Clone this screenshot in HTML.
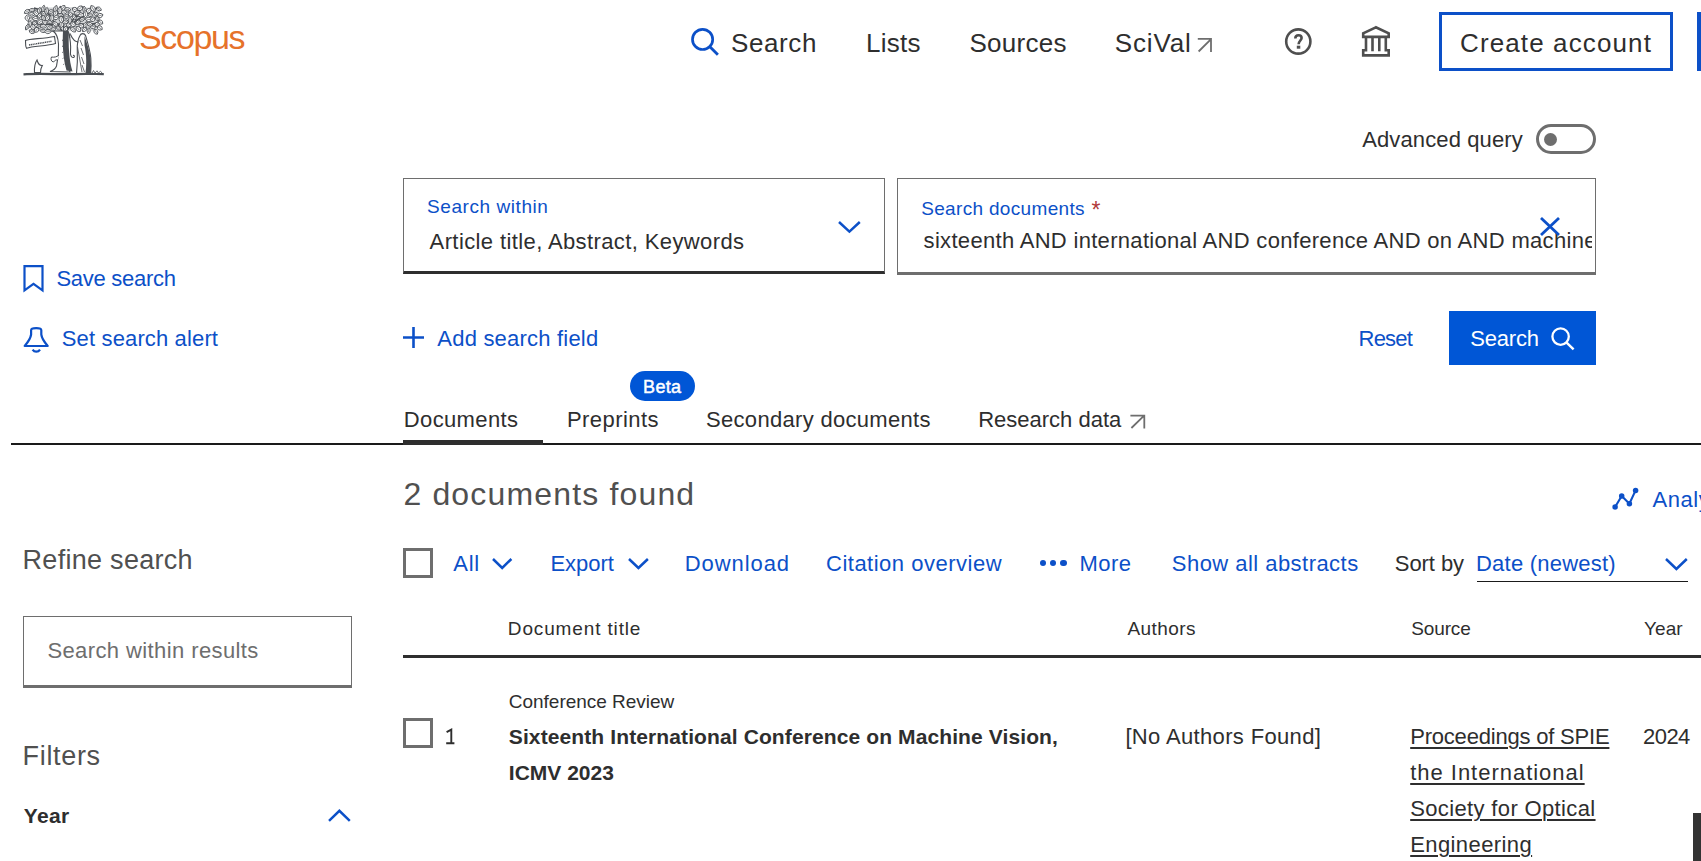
<!DOCTYPE html>
<html><head><meta charset="utf-8">
<style>
*{box-sizing:border-box;margin:0;padding:0}
html,body{width:1701px;height:861px;overflow:hidden;background:#fff}
body{font-family:"Liberation Sans",sans-serif;color:#2e2e2e;position:relative}
.a{position:absolute;white-space:nowrap;line-height:normal}
.b{position:absolute}
svg{position:absolute;overflow:visible}
</style></head>
<body>
<svg style="left:20px;top:0px" width="90" height="80" viewBox="0 0 90 80">
<g><path d="M9 12 C10 8 14 7.5 20 8 C30 7 40 8 46 7.5 C56 7 66 7.5 74 8 C79 8.5 80.5 11 80 16 C80.5 22 80 27 78 30 C72 31 62 31 55 30.5 C50 31 45 31 40 30.5 C30 31.5 18 31 12 30 C9 27 8.5 20 9 12 Z" fill="#d4d6d8"/><path d="M54 18 C62 14 70 10 78 8" fill="none" stroke="#4a4e53" stroke-width="1.5"/><path d="M36 20 C30 14 22 10 14 8" fill="none" stroke="#4a4e53" stroke-width="1.5"/><path d="M50 22 C60 24 70 26 80 22" fill="none" stroke="#4a4e53" stroke-width="1.5"/><path d="M40 24 C30 24 20 26 10 22" fill="none" stroke="#4a4e53" stroke-width="1.5"/><path d="M47 28 C52 22 58 12 62 6" fill="none" stroke="#4a4e53" stroke-width="1.5"/><path d="M44 30 C43 22 44 14 40 6" fill="none" stroke="#4a4e53" stroke-width="1.5"/><path d="M46 34 C48 26 55 20 66 15" fill="none" stroke="#4a4e53" stroke-width="1.5"/><path d="M44 36 C42 28 36 22 26 16" fill="none" stroke="#4a4e53" stroke-width="1.5"/><g transform="rotate(160 30.8 11.5)"><path d="M27.7 11.5 Q30.8 7.9 33.9 11.5 Q30.8 15.0 27.7 11.5 Z" fill="#fff" stroke="#4a4e53" stroke-width="0.85"/><path d="M29.0 11.5 H32.3" stroke="#4a4e53" stroke-width="0.6"/></g><g transform="rotate(33 54.8 9.6)"><path d="M51.9 9.6 Q54.8 5.2 57.8 9.6 Q54.8 13.9 51.9 9.6 Z" fill="#fff" stroke="#4a4e53" stroke-width="0.85"/><path d="M53.1 9.6 H56.3" stroke="#4a4e53" stroke-width="0.6"/></g><g transform="rotate(166 46.4 16.6)"><path d="M43.5 16.6 Q46.4 12.9 49.3 16.6 Q46.4 20.4 43.5 16.6 Z" fill="#fff" stroke="#4a4e53" stroke-width="0.85"/><path d="M44.6 16.6 H47.9" stroke="#4a4e53" stroke-width="0.6"/></g><g transform="rotate(163 11.3 20.1)"><path d="M7.6 20.1 Q11.3 15.5 14.9 20.1 Q11.3 24.6 7.6 20.1 Z" fill="#fff" stroke="#4a4e53" stroke-width="0.85"/><path d="M9.1 20.1 H13.1" stroke="#4a4e53" stroke-width="0.6"/></g><g transform="rotate(179 12.1 10.0)"><path d="M9.0 10.0 Q12.1 6.7 15.2 10.0 Q12.1 13.3 9.0 10.0 Z" fill="#fff" stroke="#4a4e53" stroke-width="0.85"/><path d="M10.3 10.0 H13.7" stroke="#4a4e53" stroke-width="0.6"/></g><g transform="rotate(45 38.2 27.8)"><path d="M34.9 27.8 Q38.2 24.6 41.5 27.8 Q38.2 31.0 34.9 27.8 Z" fill="#fff" stroke="#4a4e53" stroke-width="0.85"/><path d="M36.2 27.8 H39.9" stroke="#4a4e53" stroke-width="0.6"/></g><g transform="rotate(46 16.1 13.2)"><path d="M12.8 13.2 Q16.1 9.0 19.4 13.2 Q16.1 17.4 12.8 13.2 Z" fill="#fff" stroke="#4a4e53" stroke-width="0.85"/><path d="M14.1 13.2 H17.7" stroke="#4a4e53" stroke-width="0.6"/></g><g transform="rotate(28 78.8 8.9)"><path d="M75.8 8.9 Q78.8 5.3 81.7 8.9 Q78.8 12.6 75.8 8.9 Z" fill="#fff" stroke="#4a4e53" stroke-width="0.85"/><path d="M77.0 8.9 H80.2" stroke="#4a4e53" stroke-width="0.6"/></g><g transform="rotate(16 70.1 14.8)"><path d="M67.2 14.8 Q70.1 11.5 73.0 14.8 Q70.1 18.2 67.2 14.8 Z" fill="#fff" stroke="#4a4e53" stroke-width="0.85"/><path d="M68.3 14.8 H71.6" stroke="#4a4e53" stroke-width="0.6"/></g><g transform="rotate(144 29.7 27.6)"><path d="M26.0 27.6 Q29.7 24.3 33.4 27.6 Q29.7 30.8 26.0 27.6 Z" fill="#fff" stroke="#4a4e53" stroke-width="0.85"/><path d="M27.5 27.6 H31.5" stroke="#4a4e53" stroke-width="0.6"/></g><g transform="rotate(145 20.3 21.9)"><path d="M16.6 21.9 Q20.3 17.8 23.9 21.9 Q20.3 26.0 16.6 21.9 Z" fill="#fff" stroke="#4a4e53" stroke-width="0.85"/><path d="M18.1 21.9 H22.1" stroke="#4a4e53" stroke-width="0.6"/></g><g transform="rotate(54 54.0 16.8)"><path d="M50.3 16.8 Q54.0 13.5 57.6 16.8 Q54.0 20.1 50.3 16.8 Z" fill="#fff" stroke="#4a4e53" stroke-width="0.85"/><path d="M51.8 16.8 H55.8" stroke="#4a4e53" stroke-width="0.6"/></g><g transform="rotate(8 47.3 9.3)"><path d="M43.5 9.3 Q47.3 5.8 51.0 9.3 Q47.3 12.8 43.5 9.3 Z" fill="#fff" stroke="#4a4e53" stroke-width="0.85"/><path d="M45.0 9.3 H49.1" stroke="#4a4e53" stroke-width="0.6"/></g><g transform="rotate(165 30.1 22.0)"><path d="M26.5 22.0 Q30.1 18.7 33.6 22.0 Q30.1 25.2 26.5 22.0 Z" fill="#fff" stroke="#4a4e53" stroke-width="0.85"/><path d="M28.0 22.0 H31.9" stroke="#4a4e53" stroke-width="0.6"/></g><g transform="rotate(17 40.3 15.1)"><path d="M36.9 15.1 Q40.3 11.6 43.8 15.1 Q40.3 18.5 36.9 15.1 Z" fill="#fff" stroke="#4a4e53" stroke-width="0.85"/><path d="M38.2 15.1 H42.0" stroke="#4a4e53" stroke-width="0.6"/></g><g transform="rotate(120 65.4 24.7)"><path d="M61.9 24.7 Q65.4 21.2 68.9 24.7 Q65.4 28.2 61.9 24.7 Z" fill="#fff" stroke="#4a4e53" stroke-width="0.85"/><path d="M63.3 24.7 H67.1" stroke="#4a4e53" stroke-width="0.6"/></g><g transform="rotate(86 24.9 21.7)"><path d="M21.9 21.7 Q24.9 17.3 28.0 21.7 Q24.9 26.1 21.9 21.7 Z" fill="#fff" stroke="#4a4e53" stroke-width="0.85"/><path d="M23.1 21.7 H26.4" stroke="#4a4e53" stroke-width="0.6"/></g><g transform="rotate(114 45.6 29.0)"><path d="M42.1 29.0 Q45.6 24.9 49.1 29.0 Q45.6 33.0 42.1 29.0 Z" fill="#fff" stroke="#4a4e53" stroke-width="0.85"/><path d="M43.5 29.0 H47.3" stroke="#4a4e53" stroke-width="0.6"/></g><g transform="rotate(11 60.6 14.8)"><path d="M56.9 14.8 Q60.6 10.5 64.3 14.8 Q60.6 19.1 56.9 14.8 Z" fill="#fff" stroke="#4a4e53" stroke-width="0.85"/><path d="M58.4 14.8 H62.5" stroke="#4a4e53" stroke-width="0.6"/></g><g transform="rotate(93 9.9 24.0)"><path d="M6.5 24.0 Q9.9 20.1 13.3 24.0 Q9.9 27.9 6.5 24.0 Z" fill="#fff" stroke="#4a4e53" stroke-width="0.85"/><path d="M7.8 24.0 H11.6" stroke="#4a4e53" stroke-width="0.6"/></g><g transform="rotate(136 58.1 22.2)"><path d="M54.8 22.2 Q58.1 18.6 61.4 22.2 Q58.1 25.8 54.8 22.2 Z" fill="#fff" stroke="#4a4e53" stroke-width="0.85"/><path d="M56.1 22.2 H59.8" stroke="#4a4e53" stroke-width="0.6"/></g><g transform="rotate(93 68.7 30.7)"><path d="M65.7 30.7 Q68.7 27.5 71.8 30.7 Q68.7 33.9 65.7 30.7 Z" fill="#fff" stroke="#4a4e53" stroke-width="0.85"/><path d="M66.9 30.7 H70.2" stroke="#4a4e53" stroke-width="0.6"/></g><g transform="rotate(94 41.8 23.9)"><path d="M38.2 23.9 Q41.8 19.7 45.5 23.9 Q41.8 28.1 38.2 23.9 Z" fill="#fff" stroke="#4a4e53" stroke-width="0.85"/><path d="M39.6 23.9 H43.7" stroke="#4a4e53" stroke-width="0.6"/></g><g transform="rotate(38 35.4 24.0)"><path d="M32.0 24.0 Q35.4 20.0 38.7 24.0 Q35.4 28.0 32.0 24.0 Z" fill="#fff" stroke="#4a4e53" stroke-width="0.85"/><path d="M33.4 24.0 H37.0" stroke="#4a4e53" stroke-width="0.6"/></g><g transform="rotate(104 19.4 10.6)"><path d="M16.1 10.6 Q19.4 6.7 22.6 10.6 Q19.4 14.5 16.1 10.6 Z" fill="#fff" stroke="#4a4e53" stroke-width="0.85"/><path d="M17.4 10.6 H21.0" stroke="#4a4e53" stroke-width="0.6"/></g><g transform="rotate(124 27.5 17.9)"><path d="M23.8 17.9 Q27.5 13.9 31.1 17.9 Q27.5 21.8 23.8 17.9 Z" fill="#fff" stroke="#4a4e53" stroke-width="0.85"/><path d="M25.3 17.9 H29.3" stroke="#4a4e53" stroke-width="0.6"/></g><g transform="rotate(141 33.4 29.2)"><path d="M29.9 29.2 Q33.4 25.8 36.8 29.2 Q33.4 32.6 29.9 29.2 Z" fill="#fff" stroke="#4a4e53" stroke-width="0.85"/><path d="M31.3 29.2 H35.1" stroke="#4a4e53" stroke-width="0.6"/></g><g transform="rotate(47 50.3 14.2)"><path d="M47.2 14.2 Q50.3 10.5 53.4 14.2 Q50.3 17.9 47.2 14.2 Z" fill="#fff" stroke="#4a4e53" stroke-width="0.85"/><path d="M48.4 14.2 H51.9" stroke="#4a4e53" stroke-width="0.6"/></g><g transform="rotate(88 7.3 17.9)"><path d="M4.2 17.9 Q7.3 13.3 10.4 17.9 Q7.3 22.5 4.2 17.9 Z" fill="#fff" stroke="#4a4e53" stroke-width="0.85"/><path d="M5.4 17.9 H8.8" stroke="#4a4e53" stroke-width="0.6"/></g><g transform="rotate(132 77.1 24.5)"><path d="M73.9 24.5 Q77.1 20.3 80.2 24.5 Q77.1 28.7 73.9 24.5 Z" fill="#fff" stroke="#4a4e53" stroke-width="0.85"/><path d="M75.1 24.5 H78.6" stroke="#4a4e53" stroke-width="0.6"/></g><g transform="rotate(166 73.1 26.7)"><path d="M70.2 26.7 Q73.1 22.6 76.1 26.7 Q73.1 30.8 70.2 26.7 Z" fill="#fff" stroke="#4a4e53" stroke-width="0.85"/><path d="M71.3 26.7 H74.6" stroke="#4a4e53" stroke-width="0.6"/></g><g transform="rotate(173 35.8 17.5)"><path d="M32.7 17.5 Q35.8 13.0 39.0 17.5 Q35.8 21.9 32.7 17.5 Z" fill="#fff" stroke="#4a4e53" stroke-width="0.85"/><path d="M33.9 17.5 H37.4" stroke="#4a4e53" stroke-width="0.6"/></g><g transform="rotate(145 14.6 23.1)"><path d="M11.5 23.1 Q14.6 19.7 17.7 23.1 Q14.6 26.6 11.5 23.1 Z" fill="#fff" stroke="#4a4e53" stroke-width="0.85"/><path d="M12.7 23.1 H16.2" stroke="#4a4e53" stroke-width="0.6"/></g><g transform="rotate(145 7.0 11.5)"><path d="M3.8 11.5 Q7.0 7.8 10.2 11.5 Q7.0 15.2 3.8 11.5 Z" fill="#fff" stroke="#4a4e53" stroke-width="0.85"/><path d="M5.1 11.5 H8.6" stroke="#4a4e53" stroke-width="0.6"/></g><g transform="rotate(83 41.3 19.5)"><path d="M37.7 19.5 Q41.3 15.1 44.8 19.5 Q41.3 24.0 37.7 19.5 Z" fill="#fff" stroke="#4a4e53" stroke-width="0.85"/><path d="M39.1 19.5 H43.0" stroke="#4a4e53" stroke-width="0.6"/></g><g transform="rotate(165 19.3 26.5)"><path d="M15.7 26.5 Q19.3 23.0 22.8 26.5 Q19.3 29.9 15.7 26.5 Z" fill="#fff" stroke="#4a4e53" stroke-width="0.85"/><path d="M17.1 26.5 H21.1" stroke="#4a4e53" stroke-width="0.6"/></g><g transform="rotate(66 77.3 18.6)"><path d="M74.5 18.6 Q77.3 15.1 80.1 18.6 Q77.3 22.1 74.5 18.6 Z" fill="#fff" stroke="#4a4e53" stroke-width="0.85"/><path d="M75.6 18.6 H78.7" stroke="#4a4e53" stroke-width="0.6"/></g><g transform="rotate(61 75.9 31.7)"><path d="M72.9 31.7 Q75.9 27.8 78.8 31.7 Q75.9 35.6 72.9 31.7 Z" fill="#fff" stroke="#4a4e53" stroke-width="0.85"/><path d="M74.1 31.7 H77.4" stroke="#4a4e53" stroke-width="0.6"/></g><g transform="rotate(24 23.2 13.3)"><path d="M19.8 13.3 Q23.2 9.5 26.7 13.3 Q23.2 17.1 19.8 13.3 Z" fill="#fff" stroke="#4a4e53" stroke-width="0.85"/><path d="M21.1 13.3 H24.9" stroke="#4a4e53" stroke-width="0.6"/></g><g transform="rotate(44 52.9 29.6)"><path d="M49.4 29.6 Q52.9 25.9 56.4 29.6 Q52.9 33.2 49.4 29.6 Z" fill="#fff" stroke="#4a4e53" stroke-width="0.85"/><path d="M50.8 29.6 H54.6" stroke="#4a4e53" stroke-width="0.6"/></g><g transform="rotate(4 68.8 19.4)"><path d="M65.1 19.4 Q68.8 15.1 72.4 19.4 Q68.8 23.7 65.1 19.4 Z" fill="#fff" stroke="#4a4e53" stroke-width="0.85"/><path d="M66.6 19.4 H70.6" stroke="#4a4e53" stroke-width="0.6"/></g><g transform="rotate(158 62.1 19.4)"><path d="M59.0 19.4 Q62.1 15.8 65.2 19.4 Q62.1 22.9 59.0 19.4 Z" fill="#fff" stroke="#4a4e53" stroke-width="0.85"/><path d="M60.3 19.4 H63.7" stroke="#4a4e53" stroke-width="0.6"/></g><g transform="rotate(125 16.6 29.8)"><path d="M13.7 29.8 Q16.6 25.3 19.6 29.8 Q16.6 34.4 13.7 29.8 Z" fill="#fff" stroke="#4a4e53" stroke-width="0.85"/><path d="M14.9 29.8 H18.1" stroke="#4a4e53" stroke-width="0.6"/></g><g transform="rotate(118 7.3 27.1)"><path d="M3.9 27.1 Q7.3 23.9 10.6 27.1 Q7.3 30.4 3.9 27.1 Z" fill="#fff" stroke="#4a4e53" stroke-width="0.85"/><path d="M5.3 27.1 H9.0" stroke="#4a4e53" stroke-width="0.6"/></g><g transform="rotate(51 58.4 29.0)"><path d="M55.2 29.0 Q58.4 24.4 61.6 29.0 Q58.4 33.6 55.2 29.0 Z" fill="#fff" stroke="#4a4e53" stroke-width="0.85"/><path d="M56.5 29.0 H60.0" stroke="#4a4e53" stroke-width="0.6"/></g><g transform="rotate(26 76.3 14.1)"><path d="M72.9 14.1 Q76.3 10.8 79.6 14.1 Q76.3 17.4 72.9 14.1 Z" fill="#fff" stroke="#4a4e53" stroke-width="0.85"/><path d="M74.2 14.1 H77.9" stroke="#4a4e53" stroke-width="0.6"/></g><g transform="rotate(175 15.9 18.5)"><path d="M12.4 18.5 Q15.9 14.2 19.5 18.5 Q15.9 22.8 12.4 18.5 Z" fill="#fff" stroke="#4a4e53" stroke-width="0.85"/><path d="M13.8 18.5 H17.7" stroke="#4a4e53" stroke-width="0.6"/></g><g transform="rotate(135 64.6 29.5)"><path d="M61.6 29.5 Q64.6 26.0 67.6 29.5 Q64.6 33.0 61.6 29.5 Z" fill="#fff" stroke="#4a4e53" stroke-width="0.85"/><path d="M62.8 29.5 H66.1" stroke="#4a4e53" stroke-width="0.6"/></g><g transform="rotate(7 23.1 30.9)"><path d="M19.8 30.9 Q23.1 27.5 26.5 30.9 Q23.1 34.2 19.8 30.9 Z" fill="#fff" stroke="#4a4e53" stroke-width="0.85"/><path d="M21.1 30.9 H24.8" stroke="#4a4e53" stroke-width="0.6"/></g><g transform="rotate(34 79.8 27.9)"><path d="M76.8 27.9 Q79.8 23.5 82.7 27.9 Q79.8 32.4 76.8 27.9 Z" fill="#fff" stroke="#4a4e53" stroke-width="0.85"/><path d="M78.0 27.9 H81.2" stroke="#4a4e53" stroke-width="0.6"/></g><g transform="rotate(142 60.1 8.3)"><path d="M57.0 8.3 Q60.1 3.7 63.2 8.3 Q60.1 12.8 57.0 8.3 Z" fill="#fff" stroke="#4a4e53" stroke-width="0.85"/><path d="M58.2 8.3 H61.6" stroke="#4a4e53" stroke-width="0.6"/></g><g transform="rotate(29 11.7 31.6)"><path d="M8.8 31.6 Q11.7 27.9 14.7 31.6 Q11.7 35.4 8.8 31.6 Z" fill="#fff" stroke="#4a4e53" stroke-width="0.85"/><path d="M10.0 31.6 H13.2" stroke="#4a4e53" stroke-width="0.6"/></g><g transform="rotate(145 48.9 24.8)"><path d="M46.0 24.8 Q48.9 20.4 51.8 24.8 Q48.9 29.1 46.0 24.8 Z" fill="#fff" stroke="#4a4e53" stroke-width="0.85"/><path d="M47.2 24.8 H50.4" stroke="#4a4e53" stroke-width="0.6"/></g><g transform="rotate(98 26.7 10.9)"><path d="M23.1 10.9 Q26.7 7.3 30.3 10.9 Q26.7 14.6 23.1 10.9 Z" fill="#fff" stroke="#4a4e53" stroke-width="0.85"/><path d="M24.5 10.9 H28.5" stroke="#4a4e53" stroke-width="0.6"/></g><g transform="rotate(8 43.8 12.1)"><path d="M40.9 12.1 Q43.8 7.9 46.7 12.1 Q43.8 16.3 40.9 12.1 Z" fill="#fff" stroke="#4a4e53" stroke-width="0.85"/><path d="M42.0 12.1 H45.2" stroke="#4a4e53" stroke-width="0.6"/></g><g transform="rotate(91 50.0 20.6)"><path d="M46.5 20.6 Q50.0 17.1 53.6 20.6 Q50.0 24.1 46.5 20.6 Z" fill="#fff" stroke="#4a4e53" stroke-width="0.85"/><path d="M47.9 20.6 H51.8" stroke="#4a4e53" stroke-width="0.6"/></g><g transform="rotate(50 53.0 24.3)"><path d="M50.0 24.3 Q53.0 19.9 56.0 24.3 Q53.0 28.7 50.0 24.3 Z" fill="#fff" stroke="#4a4e53" stroke-width="0.85"/><path d="M51.2 24.3 H54.5" stroke="#4a4e53" stroke-width="0.6"/></g><g transform="rotate(127 43.0 7.9)"><path d="M40.0 7.9 Q43.0 3.7 45.9 7.9 Q43.0 12.1 40.0 7.9 Z" fill="#fff" stroke="#4a4e53" stroke-width="0.85"/><path d="M41.2 7.9 H44.4" stroke="#4a4e53" stroke-width="0.6"/></g><g transform="rotate(7 11.5 14.3)"><path d="M8.2 14.3 Q11.5 10.7 14.7 14.3 Q11.5 17.9 8.2 14.3 Z" fill="#fff" stroke="#4a4e53" stroke-width="0.85"/><path d="M9.5 14.3 H13.1" stroke="#4a4e53" stroke-width="0.6"/></g><g transform="rotate(138 68.7 10.7)"><path d="M65.2 10.7 Q68.7 6.5 72.2 10.7 Q68.7 14.9 65.2 10.7 Z" fill="#fff" stroke="#4a4e53" stroke-width="0.85"/><path d="M66.6 10.7 H70.4" stroke="#4a4e53" stroke-width="0.6"/></g><g transform="rotate(36 80.4 22.1)"><path d="M77.6 22.1 Q80.4 18.0 83.3 22.1 Q80.4 26.2 77.6 22.1 Z" fill="#fff" stroke="#4a4e53" stroke-width="0.85"/><path d="M78.7 22.1 H81.8" stroke="#4a4e53" stroke-width="0.6"/></g><g transform="rotate(125 72.8 19.3)"><path d="M70.0 19.3 Q72.8 14.9 75.6 19.3 Q72.8 23.6 70.0 19.3 Z" fill="#fff" stroke="#4a4e53" stroke-width="0.85"/><path d="M71.1 19.3 H74.2" stroke="#4a4e53" stroke-width="0.6"/></g><g transform="rotate(162 45.5 21.9)"><path d="M42.4 21.9 Q45.5 18.0 48.7 21.9 Q45.5 25.8 42.4 21.9 Z" fill="#fff" stroke="#4a4e53" stroke-width="0.85"/><path d="M43.6 21.9 H47.1" stroke="#4a4e53" stroke-width="0.6"/></g><g transform="rotate(117 35.5 13.2)"><path d="M31.8 13.2 Q35.5 9.1 39.2 13.2 Q35.5 17.3 31.8 13.2 Z" fill="#fff" stroke="#4a4e53" stroke-width="0.85"/><path d="M33.3 13.2 H37.4" stroke="#4a4e53" stroke-width="0.6"/></g><g transform="rotate(93 31.8 18.0)"><path d="M28.3 18.0 Q31.8 14.1 35.4 18.0 Q31.8 21.9 28.3 18.0 Z" fill="#fff" stroke="#4a4e53" stroke-width="0.85"/><path d="M29.7 18.0 H33.6" stroke="#4a4e53" stroke-width="0.6"/></g><g transform="rotate(6 23.3 26.2)"><path d="M19.9 26.2 Q23.3 22.4 26.6 26.2 Q23.3 30.0 19.9 26.2 Z" fill="#fff" stroke="#4a4e53" stroke-width="0.85"/><path d="M21.3 26.2 H24.9" stroke="#4a4e53" stroke-width="0.6"/></g><g transform="rotate(60 23.4 17.9)"><path d="M20.2 17.9 Q23.4 14.4 26.6 17.9 Q23.4 21.4 20.2 17.9 Z" fill="#fff" stroke="#4a4e53" stroke-width="0.85"/><path d="M21.5 17.9 H25.0" stroke="#4a4e53" stroke-width="0.6"/></g><g transform="rotate(56 72.9 8.5)"><path d="M69.4 8.5 Q72.9 4.1 76.5 8.5 Q72.9 13.0 69.4 8.5 Z" fill="#fff" stroke="#4a4e53" stroke-width="0.85"/><path d="M70.8 8.5 H74.7" stroke="#4a4e53" stroke-width="0.6"/></g><g transform="rotate(82 64.5 9.7)"><path d="M60.8 9.7 Q64.5 6.3 68.1 9.7 Q64.5 13.1 60.8 9.7 Z" fill="#fff" stroke="#4a4e53" stroke-width="0.85"/><path d="M62.3 9.7 H66.3" stroke="#4a4e53" stroke-width="0.6"/></g><g transform="rotate(93 65.6 14.2)"><path d="M62.1 14.2 Q65.6 9.9 69.2 14.2 Q65.6 18.5 62.1 14.2 Z" fill="#fff" stroke="#4a4e53" stroke-width="0.85"/><path d="M63.5 14.2 H67.4" stroke="#4a4e53" stroke-width="0.6"/></g><g transform="rotate(70 12.9 26.9)"><path d="M10.0 26.9 Q12.9 22.3 15.9 26.9 Q12.9 31.4 10.0 26.9 Z" fill="#fff" stroke="#4a4e53" stroke-width="0.85"/><path d="M11.2 26.9 H14.4" stroke="#4a4e53" stroke-width="0.6"/></g><g transform="rotate(110 35.5 8.6)"><path d="M32.1 8.6 Q35.5 4.9 39.0 8.6 Q35.5 12.3 32.1 8.6 Z" fill="#fff" stroke="#4a4e53" stroke-width="0.85"/><path d="M33.5 8.6 H37.3" stroke="#4a4e53" stroke-width="0.6"/></g><g transform="rotate(20 69.7 24.2)"><path d="M66.3 24.2 Q69.7 20.5 73.0 24.2 Q69.7 28.0 66.3 24.2 Z" fill="#fff" stroke="#4a4e53" stroke-width="0.85"/><path d="M67.6 24.2 H71.3" stroke="#4a4e53" stroke-width="0.6"/></g><g transform="rotate(160 57.1 12.9)"><path d="M53.6 12.9 Q57.1 8.7 60.5 12.9 Q57.1 17.2 53.6 12.9 Z" fill="#fff" stroke="#4a4e53" stroke-width="0.85"/><path d="M55.0 12.9 H58.8" stroke="#4a4e53" stroke-width="0.6"/></g><g transform="rotate(103 23.3 8.7)"><path d="M19.7 8.7 Q23.3 5.3 26.8 8.7 Q23.3 12.1 19.7 8.7 Z" fill="#fff" stroke="#4a4e53" stroke-width="0.85"/><path d="M21.2 8.7 H25.1" stroke="#4a4e53" stroke-width="0.6"/></g><g transform="rotate(179 27.9 31.7)"><path d="M24.6 31.7 Q27.9 27.7 31.3 31.7 Q27.9 35.7 24.6 31.7 Z" fill="#fff" stroke="#4a4e53" stroke-width="0.85"/><path d="M25.9 31.7 H29.6" stroke="#4a4e53" stroke-width="0.6"/></g><g transform="rotate(34 61.3 25.8)"><path d="M58.4 25.8 Q61.3 21.6 64.2 25.8 Q61.3 30.0 58.4 25.8 Z" fill="#fff" stroke="#4a4e53" stroke-width="0.85"/><path d="M59.6 25.8 H62.7" stroke="#4a4e53" stroke-width="0.6"/></g><g transform="rotate(131 19.5 15.5)"><path d="M16.1 15.5 Q19.5 11.9 23.0 15.5 Q19.5 19.1 16.1 15.5 Z" fill="#fff" stroke="#4a4e53" stroke-width="0.85"/><path d="M17.5 15.5 H21.3" stroke="#4a4e53" stroke-width="0.6"/></g><g transform="rotate(88 39.9 10.5)"><path d="M36.4 10.5 Q39.9 6.4 43.5 10.5 Q39.9 14.6 36.4 10.5 Z" fill="#fff" stroke="#4a4e53" stroke-width="0.85"/><path d="M37.8 10.5 H41.7" stroke="#4a4e53" stroke-width="0.6"/></g><g transform="rotate(164 80.2 15.5)"><path d="M77.3 15.5 Q80.2 11.2 83.1 15.5 Q80.2 19.8 77.3 15.5 Z" fill="#fff" stroke="#4a4e53" stroke-width="0.85"/><path d="M78.5 15.5 H81.7" stroke="#4a4e53" stroke-width="0.6"/></g></g>
<path d="M33 31 C36 33 38 37 38.5 44 C39 52 38 60 36.5 66 C35.5 69 33 70.5 30 71.5 L50 72 C48 66 46.5 56 46 46 C45.8 40 46 35 47 31 Z" fill="#fff" stroke="#4a4e53" stroke-width="1.1"/>
<path d="M43 31 C42.3 44 43 58 46.5 70.5 L52.5 71.5 C49 60 48.3 46 48.8 31 Z" fill="#4a4e53"/>
<path d="M43 40 L42 40.5 M43 46 L42 46.5 M43.2 52 L42.2 52.5 M43.6 58 L42.6 58.5 M44.3 64 L43.3 64.5" stroke="#4a4e53" stroke-width="0.9"/>
<path d="M39 55 C37 57 34 57.5 31.5 57 C30.5 59 31 61.5 33.5 62 C35 60 36.5 59.5 38 60" fill="#fff" stroke="#4a4e53" stroke-width="1"/>
<path d="M48.5 32 C50 38 51 46 50.5 52 C50 55 51.5 58 53.5 57.5 C55 57 54.5 55 53 55.5" fill="none" stroke="#4a4e53" stroke-width="1.1"/>
<path d="M60 35.5 C61 33 64.5 33 65.5 35.5 C67.5 42 70 50 70.8 58 C71.3 65 71 70 70.6 73.5 L56.5 73.5 C57.3 66 57.6 57 57.3 50 C57 44 58 39 60 35.5 Z" fill="#fff" stroke="#4a4e53" stroke-width="1.1"/>
<path d="M64.5 36 C67 43 69.8 51 70.6 59 C71.2 66 71 70 70.6 73.5 L65.5 73.5 C66.5 66 66.8 56 64.5 45 Z" fill="#4a4e53"/>
<path d="M58.5 42 C55 42 52 38 50.5 34.5 M50.5 33.5 C49.5 34 49 36 50 37.5" fill="none" stroke="#4a4e53" stroke-width="1.1"/>
<path d="M57.5 47 L62 72 M60 40 L62.5 46 M61 48 L63.5 55 M61.5 57 L64 64 M62 65 L64.5 72" fill="none" stroke="#4a4e53" stroke-width="0.8"/>
<path d="M5.5 40.5 C10 38.5 22 39 34.5 36.5 L35.5 43.5 C26 46.5 13 45.5 6.5 48.3 C5 46 5.8 42.5 5.5 40.5 Z" fill="#fff" stroke="#4a4e53" stroke-width="1.1"/>
<path d="M9 45 L32 41.2" stroke="#4a4e53" stroke-width="1.5" stroke-dasharray="1.2 0.6"/>
<path d="M14.5 72.5 C14.2 67 15.2 62.5 17 60 C18 63.5 19.2 66 22.3 65.5 C21 68 20.3 70.5 20.5 72.5 Z" fill="#fff" stroke="#4a4e53" stroke-width="1.1"/>
<path d="M3.5 74.3 C20 73.3 40 74.5 56 74.1 C66 73.7 76 74.1 83.8 74.1" fill="none" stroke="#4a4e53" stroke-width="2.2"/>
<path d="M72 73 L73.5 70.5 L75 73 L77 70.8 L78.5 73 L80.5 71.2 L82 73" fill="none" stroke="#4a4e53" stroke-width="0.8"/>
</svg>
<div class="a" style="left:139.0px;top:18.2px;font-size:34px;color:#e6722a;letter-spacing:-1.40px;">Scopus</div>
<svg style="left:685px;top:22px" width="40" height="40" viewBox="0 0 40 40"><circle cx="17.6" cy="17.4" r="10.1" fill="none" stroke="#0c50c8" stroke-width="2.7"/><path d="M24.6 24.4 L32.9 32.7" stroke="#0c50c8" stroke-width="2.8"/></svg>
<div class="a" style="left:731.0px;top:28.0px;font-size:26px;color:#2e2e2e;letter-spacing:0.60px;">Search</div>
<div class="a" style="left:866.0px;top:28.0px;font-size:26px;color:#2e2e2e;letter-spacing:0.25px;">Lists</div>
<div class="a" style="left:969.4px;top:28.0px;font-size:26px;color:#2e2e2e;letter-spacing:0.27px;">Sources</div>
<div class="a" style="left:1114.8px;top:28.0px;font-size:26px;color:#2e2e2e;letter-spacing:0.84px;">SciVal</div>
<svg style="left:1197px;top:37px" width="16" height="16" viewBox="0 0 16 16"><path d="M1.6 14.5 L13.8 2.4 M0.8 1.9 H14 V15" fill="none" stroke="#6e6e6e" stroke-width="1.8"/></svg>
<svg style="left:1275px;top:20px" width="125" height="42" viewBox="0 0 125 42"><circle cx="23.3" cy="21.5" r="12.1" fill="none" stroke="#4f4f4f" stroke-width="2.6"/><path d="M20.3 18.6 C20.3 16.3 21.7 15.3 23.5 15.3 C25.3 15.3 26.6 16.4 26.6 18 C26.6 20.2 23.6 21 23.6 24.3" fill="none" stroke="#4f4f4f" stroke-width="2.6"/><rect x="21.8" y="25.7" width="3.5" height="3" fill="#4f4f4f"/><path d="M100.8 7.3 L88.2 13.3 V16.9 H91 V30.3 H88.2 V35.4 H113.7 V30.3 H110.8 V16.9 H113.7 V13.3 Z M88.2 16.9 H113.7" fill="none" stroke="#4f4f4f" stroke-width="2.6" stroke-linejoin="miter"/><path d="M97.5 17 V31.2 M104.3 17 V31.2" stroke="#4f4f4f" stroke-width="2.6"/></svg>
<div class="b" style="left:1439px;top:12px;width:234px;height:59px;border:3px solid #0c50c8"></div>
<div class="a" style="left:1460.0px;top:28.0px;font-size:26px;color:#2e2e2e;letter-spacing:1.12px;">Create account</div>
<div class="b" style="left:1697px;top:12px;width:4px;height:59px;background:#0c50c8"></div>
<div class="a" style="left:1362.2px;top:127.0px;font-size:22px;color:#2e2e2e;letter-spacing:0.12px;">Advanced query</div>
<div class="b" style="left:1536px;top:124px;width:60px;height:30px;border:3px solid #6e6e6e;border-radius:15px"></div>
<div class="b" style="left:1543.5px;top:132.5px;width:13px;height:13px;border-radius:50%;background:#6e6e6e"></div>
<div class="b" style="left:403px;top:178px;width:482px;height:96px;border:1px solid #6e6e6e;border-bottom:3px solid #2e2e2e"></div>
<div class="a" style="left:427.0px;top:196.0px;font-size:19px;color:#0c50c8;letter-spacing:0.57px;">Search within</div>
<div class="a" style="left:429.6px;top:229.0px;font-size:22px;color:#2e2e2e;letter-spacing:0.39px;">Article title, Abstract, Keywords</div>
<svg style="left:837.7px;top:221.2px" width="22.8" height="12.4" viewBox="0 0 22.8 12.4"><path d="M1 1 L11.4 10.6 L21.8 1" fill="none" stroke="#0c50c8" stroke-width="2.5"/></svg>
<div class="b" style="left:897px;top:178px;width:699px;height:97px;border:1px solid #6e6e6e;border-bottom:3px solid #6e6e6e"></div>
<div class="a" style="left:921.2px;top:198.0px;font-size:19px;color:#0c50c8;letter-spacing:0.33px;">Search documents</div>
<div class="a" style="left:1091.6px;top:196.5px;font-size:23px;color:#b23b3b;">*</div>
<div class="b" style="left:898px;top:200px;width:694px;height:60px;overflow:hidden"><div class="a" style="left:25.6px;top:28.0px;font-size:22px;color:#2e2e2e;letter-spacing:0.31px;">sixteenth AND international AND conference AND on AND machine</div>
</div>
<svg style="left:1540px;top:217px" width="20" height="19" viewBox="0 0 20 19"><path d="M1 1 L19 18 M19 1 L1 18" fill="none" stroke="#0c50c8" stroke-width="2.8"/></svg>
<svg style="left:23px;top:265px" width="21" height="27" viewBox="0 0 21 27"><path d="M1.5 1.2 H19.5 V25.3 L10.5 18.8 L1.5 25.3 Z" fill="none" stroke="#0c50c8" stroke-width="2.2" stroke-linejoin="miter"/></svg>
<div class="a" style="left:56.4px;top:266.0px;font-size:22px;color:#0c50c8;letter-spacing:-0.26px;">Save search</div>
<svg style="left:18px;top:320px" width="37" height="38" viewBox="18 320 37 38"><path d="M24.7 346 C27.6 342.6 30.6 338.6 31.1 334.5 V330.2 C31.1 328.8 33.4 328.2 36.2 328.2 C39 328.2 41.3 328.8 41.3 330.2 V334.5 C41.8 338.6 44.8 342.6 47.7 346 Z" fill="none" stroke="#0c50c8" stroke-width="2.2" stroke-linejoin="round"/><path d="M32.6 349.6 C34.4 352.4 38.2 352.4 40 349.6" fill="none" stroke="#0c50c8" stroke-width="2.2"/></svg>
<div class="a" style="left:61.8px;top:325.5px;font-size:22px;color:#0c50c8;letter-spacing:0.14px;">Set search alert</div>
<svg style="left:403px;top:327px" width="21" height="21" viewBox="0 0 21 21"><path d="M10.5 0 V21 M0 10.5 H21" stroke="#0c50c8" stroke-width="2.6"/></svg>
<div class="a" style="left:437.3px;top:326.0px;font-size:22px;color:#0c50c8;letter-spacing:0.21px;">Add search field</div>
<div class="a" style="left:1358.6px;top:326.0px;font-size:22px;color:#0c50c8;letter-spacing:-0.80px;">Reset</div>
<div class="b" style="left:1449px;top:311px;width:147px;height:54px;background:#0056d6"></div>
<div class="a" style="left:1470.3px;top:326.0px;font-size:22px;color:#fff;letter-spacing:-0.20px;">Search</div>
<svg style="left:1551px;top:327px" width="24" height="23" viewBox="0 0 24 23"><circle cx="9.6" cy="9.6" r="8.2" fill="none" stroke="#fff" stroke-width="2.3"/><path d="M15.6 15.6 L22.6 22.4" stroke="#fff" stroke-width="2.4"/></svg>
<div class="b" style="left:630px;top:371px;width:65px;height:30px;border-radius:15px;background:#0056d6"></div>
<div class="a" style="left:643.1px;top:377.0px;font-size:18px;color:#fff;letter-spacing:0.30px;-webkit-text-stroke:0.45px #fff;">Beta</div>
<div class="a" style="left:403.8px;top:407.0px;font-size:22px;color:#2e2e2e;letter-spacing:0.36px;">Documents</div>
<div class="a" style="left:567.0px;top:407.0px;font-size:22px;color:#2e2e2e;letter-spacing:0.43px;">Preprints</div>
<div class="a" style="left:706.0px;top:407.0px;font-size:22px;color:#2e2e2e;letter-spacing:0.31px;">Secondary documents</div>
<div class="a" style="left:978.2px;top:407.0px;font-size:22px;color:#2e2e2e;">Research data</div>
<svg style="left:1129.8px;top:414.3px" width="16" height="16" viewBox="0 0 16 16"><path d="M1.4 14 L13.6 2.2 M0.4 1.6 H14.3 V14.5" fill="none" stroke="#6e6e6e" stroke-width="1.8"/></svg>
<div class="b" style="left:11px;top:443px;width:1690px;height:2px;background:#1a1a1a"></div>
<div class="b" style="left:403px;top:440px;width:140px;height:5px;background:#2e2e2e"></div>
<div class="a" style="left:403.4px;top:476.0px;font-size:32px;color:#505050;letter-spacing:1.16px;">2 documents found</div>
<svg style="left:1600px;top:480px" width="40" height="40" viewBox="0 0 40 40"><path d="M15.1 27 L21.7 16 L29.4 23.8 L35.6 10.4" fill="none" stroke="#0c50c8" stroke-width="2.1"/><circle cx="15.1" cy="27" r="2.75" fill="#0c50c8"/><circle cx="21.7" cy="16" r="2.75" fill="#0c50c8"/><circle cx="29.4" cy="23.8" r="2.75" fill="#0c50c8"/><circle cx="35.6" cy="10.4" r="2.75" fill="#0c50c8"/></svg>
<div class="a" style="left:1652.4px;top:486.6px;font-size:22px;color:#0c50c8;letter-spacing:0.60px;">Analyze results</div>
<div class="a" style="left:22.6px;top:545.0px;font-size:27px;color:#505050;letter-spacing:0.28px;">Refine search</div>
<div class="b" style="left:403px;top:548px;width:30px;height:30px;border:3px solid #6e6e6e"></div>
<div class="a" style="left:453.3px;top:551.0px;font-size:22px;color:#0c50c8;letter-spacing:0.70px;">All</div>
<svg style="left:492.2px;top:558.4px" width="20.4" height="11.8" viewBox="0 0 20.4 11.8"><path d="M1 1 L10.2 10.0 L19.4 1" fill="none" stroke="#0c50c8" stroke-width="2.5"/></svg>
<div class="a" style="left:550.4px;top:551.0px;font-size:22px;color:#0c50c8;">Export</div>
<svg style="left:627.6px;top:558.4px" width="20.9" height="11.8" viewBox="0 0 20.9 11.8"><path d="M1 1 L10.45 10.0 L19.9 1" fill="none" stroke="#0c50c8" stroke-width="2.5"/></svg>
<div class="a" style="left:684.8px;top:551.0px;font-size:22px;color:#0c50c8;letter-spacing:0.91px;">Download</div>
<div class="a" style="left:826.0px;top:551.0px;font-size:22px;color:#0c50c8;letter-spacing:0.50px;">Citation overview</div>
<div class="b" style="left:1039.80px;top:559.6px;width:6.4px;height:6.4px;border-radius:50%;background:#0c50c8"></div>
<div class="b" style="left:1050.05px;top:559.6px;width:6.4px;height:6.4px;border-radius:50%;background:#0c50c8"></div>
<div class="b" style="left:1060.30px;top:559.6px;width:6.4px;height:6.4px;border-radius:50%;background:#0c50c8"></div>
<div class="a" style="left:1079.4px;top:551.0px;font-size:22px;color:#0c50c8;letter-spacing:0.53px;">More</div>
<div class="a" style="left:1171.8px;top:551.0px;font-size:22px;color:#0c50c8;letter-spacing:0.46px;">Show all abstracts</div>
<div class="a" style="left:1394.8px;top:551.0px;font-size:22px;color:#2e2e2e;letter-spacing:-0.07px;">Sort by</div>
<div class="a" style="left:1476.0px;top:551.0px;font-size:22px;color:#0c50c8;letter-spacing:0.22px;">Date (newest)</div>
<svg style="left:1664.6px;top:558.1px" width="22.8" height="12.8" viewBox="0 0 22.8 12.8"><path d="M1 1 L11.4 11.0 L21.8 1" fill="none" stroke="#0c50c8" stroke-width="2.5"/></svg>
<div class="b" style="left:1477px;top:581px;width:211px;height:1px;background:#1a1a1a"></div>
<div class="b" style="left:23px;top:616px;width:329px;height:72px;border:1px solid #6e6e6e;border-bottom:3px solid #6e6e6e"></div>
<div class="a" style="left:47.4px;top:638.0px;font-size:22px;color:#6e6e6e;letter-spacing:0.40px;">Search within results</div>
<div class="a" style="left:22.6px;top:741.0px;font-size:27px;color:#505050;letter-spacing:0.67px;">Filters</div>
<div class="a" style="left:23.8px;top:804.0px;font-size:21px;color:#2e2e2e;letter-spacing:0.33px;font-weight:bold;">Year</div>
<svg style="left:328px;top:808.6px" width="22.8" height="12.8" viewBox="0 0 22.8 12.8"><path d="M1 11.8 L11.4 1.8 L21.8 11.8" fill="none" stroke="#0c50c8" stroke-width="2.5"/></svg>
<div class="a" style="left:507.8px;top:618.0px;font-size:19px;color:#2e2e2e;letter-spacing:0.86px;">Document title</div>
<div class="a" style="left:1127.4px;top:618.0px;font-size:19px;color:#2e2e2e;letter-spacing:0.43px;">Authors</div>
<div class="a" style="left:1411.2px;top:618.0px;font-size:19px;color:#2e2e2e;letter-spacing:-0.12px;">Source</div>
<div class="a" style="left:1644.0px;top:618.0px;font-size:19px;color:#2e2e2e;letter-spacing:0.07px;">Year</div>
<div class="b" style="left:403px;top:655px;width:1298px;height:3px;background:#2e2e2e"></div>
<div class="a" style="left:508.8px;top:691.0px;font-size:19px;color:#2e2e2e;letter-spacing:-0.02px;">Conference Review</div>
<div class="b" style="left:403px;top:718px;width:30px;height:30px;border:3px solid #6e6e6e"></div>
<svg style="left:440px;top:725px" width="20" height="22" viewBox="440 725 20 22"><path d="M446.6 732.2 L451.3 729.6 V743.3 M446.2 743.2 H454.4" fill="none" stroke="#2e2e2e" stroke-width="1.9"/></svg>
<div class="a" style="left:508.8px;top:725.0px;font-size:21px;color:#2e2e2e;letter-spacing:0.11px;font-weight:bold;">Sixteenth International Conference on Machine Vision,</div>
<div class="a" style="left:508.8px;top:761.0px;font-size:21px;color:#2e2e2e;letter-spacing:0.01px;font-weight:bold;">ICMV 2023</div>
<div class="a" style="left:1125.4px;top:724.0px;font-size:22px;color:#2e2e2e;letter-spacing:0.35px;">[No Authors Found]</div>
<div class="a" style="left:1410.2px;top:724.0px;font-size:22px;color:#2e2e2e;letter-spacing:-0.20px;text-decoration:underline;text-underline-offset:3px;text-decoration-thickness:2px;">Proceedings of SPIE</div>
<div class="a" style="left:1410.2px;top:760.0px;font-size:22px;color:#2e2e2e;letter-spacing:0.98px;text-decoration:underline;text-underline-offset:3px;text-decoration-thickness:2px;">the International</div>
<div class="a" style="left:1410.2px;top:796.0px;font-size:22px;color:#2e2e2e;letter-spacing:0.36px;text-decoration:underline;text-underline-offset:3px;text-decoration-thickness:2px;">Society for Optical</div>
<div class="a" style="left:1410.2px;top:832.0px;font-size:22px;color:#2e2e2e;letter-spacing:0.41px;text-decoration:underline;text-underline-offset:3px;text-decoration-thickness:2px;">Engineering</div>
<div class="a" style="left:1643.0px;top:724.0px;font-size:22px;color:#2e2e2e;letter-spacing:-0.53px;">2024</div>
<div class="b" style="left:1693px;top:813px;width:8px;height:48px;background:#333"></div>
</body></html>
